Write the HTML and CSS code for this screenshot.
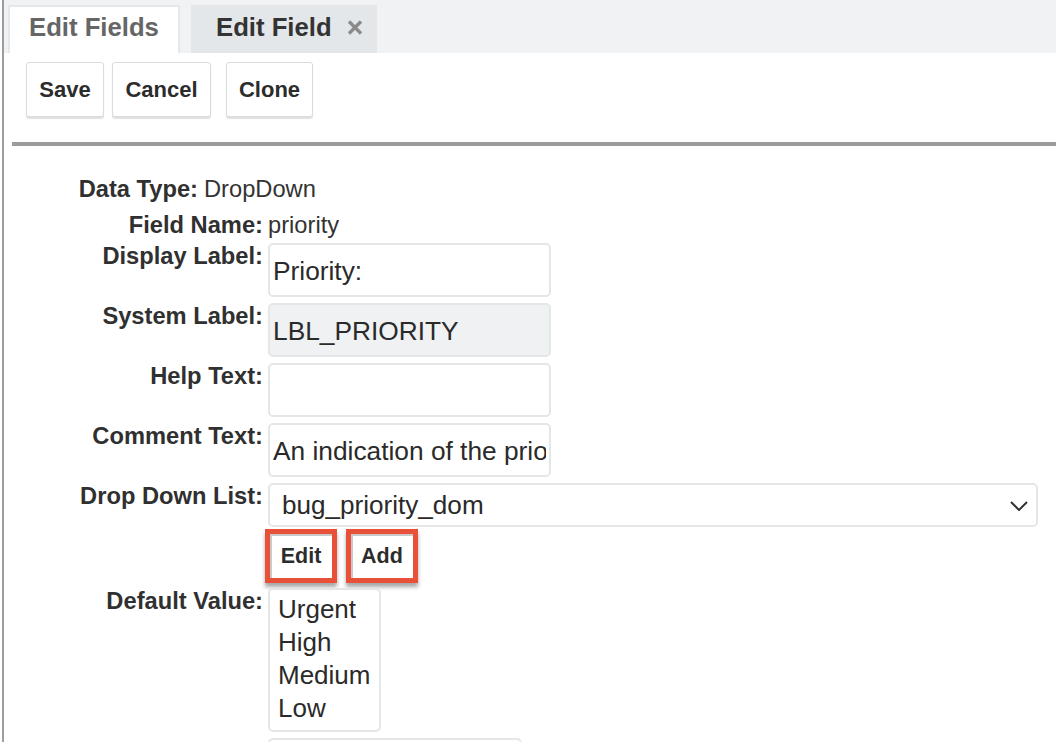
FILE: index.html
```html
<!DOCTYPE html>
<html lang="en">
<head>
<meta charset="utf-8">
<title>Edit Field</title>
<link rel="stylesheet" href="styles.css">
</head>
<body>
<div class="frame">
  <div class="tabs">
    <div class="tab tab-inactive">Edit Fields</div>
    <div class="tab tab-active">Edit Field
      <svg class="tab-close" width="16" height="15" viewBox="0 0 16 15"><path d="M2 1.5 L14 13.5 M14 1.5 L2 13.5" stroke="#8a8a8a" stroke-width="3.4" fill="none"/></svg>
    </div>
  </div>
  <div class="toolbar">
    <button class="btn btn-save">Save</button>
    <button class="btn btn-cancel">Cancel</button>
    <button class="btn btn-clone">Clone</button>
  </div>
  <div class="rule"></div>
  <div class="form">
    <div class="row row-first">
      <div class="label label-short">Data Type:</div>
      <div class="value-text">DropDown</div>
    </div>
    <div class="row row-second">
      <div class="label">Field Name:</div>
      <div class="value-text value-plain">priority</div>
    </div>
    <div class="row row-input">
      <div class="label">Display Label:</div>
      <input class="text-input" type="text" value="Priority:">
    </div>
    <div class="row row-input">
      <div class="label">System Label:</div>
      <input class="text-input text-input-disabled" type="text" value="LBL_PRIORITY" readonly>
    </div>
    <div class="row row-input">
      <div class="label">Help Text:</div>
      <input class="text-input" type="text" value="">
    </div>
    <div class="row row-input">
      <div class="label">Comment Text:</div>
      <input class="text-input" type="text" value="An indication of the priority of the issue">
    </div>
    <div class="row row-input">
      <div class="label">Drop Down List:</div>
      <div class="select">
        <span class="select-text">bug_priority_dom</span>
        <svg class="chevron" width="18" height="10" viewBox="0 0 18 10"><path d="M1 1 L9 9 L17 1" stroke="#333" stroke-width="2" fill="none"/></svg>
      </div>
    </div>
    <div class="row row-actions">
      <div class="label"></div>
      <div class="actions">
        <button class="hl-btn hl-edit">Edit</button>
        <button class="hl-btn hl-add">Add</button>
      </div>
    </div>
    <div class="row row-list">
      <div class="label">Default Value:</div>
      <div class="listbox">
        <div class="option">Urgent</div>
        <div class="option">High</div>
        <div class="option">Medium</div>
        <div class="option">Low</div>
      </div>
    </div>
    <div class="row row-last">
      <div class="label"></div>
      <input class="text-input text-input-short" type="text" value="">
    </div>
  </div>
</div>
</body>
</html>
```
FILE: styles.css
```css
* { box-sizing: border-box; }
html, body {
  margin: 0;
  padding: 0;
  background: #ffffff;
  overflow: hidden;
}
body {
  font-family: "Liberation Sans", Arial, Helvetica, sans-serif;
  color: #333333;
}
.frame {
  margin-left: 2px;
  border-left: 2px solid #9d9d9d;
  height: 742px;
  overflow: hidden;
}
.tabs {
  display: flex;
  gap: 11px;
  height: 53px;
  padding: 5px 0 0 4px;
  background: #f0f2f4;
}
.tab {
  height: 48px;
  font-size: 25.7px;
  font-weight: bold;
  line-height: 30px;
  padding-top: 7px;
  white-space: nowrap;
}
.tab-inactive {
  width: 172px;
  background: #ffffff;
  color: #666666;
  border: 2px solid #e3e8ec;
  border-bottom: none;
  padding-left: 19px;
  padding-top: 5px;
}
.tab-active {
  width: 186px;
  background: #e4e7ea;
  color: #333333;
  padding-left: 25px;
  display: flex;
  align-items: flex-start;
}
.tab-close {
  margin-left: 15px;
  margin-top: 8px;
}
.toolbar {
  display: flex;
  padding: 9px 0 0 22px;
}
.btn {
  height: 55px;
  background: #ffffff;
  border: 1px solid #d9dcde;
  border-radius: 3px;
  box-shadow: 0 2px 1px rgba(0,0,0,0.12);
  font-family: "Liberation Sans", Arial, sans-serif;
  font-size: 22px;
  font-weight: bold;
  color: #2c2c2c;
  padding: 0;
}
.btn-save { width: 78px; }
.btn-cancel { width: 99px; margin-left: 8px; }
.btn-clone { width: 87px; margin-left: 15px; }
.rule {
  height: 4px;
  margin: 25px 0 0 8px;
  background: #9b9b9b;
}
.form {
  padding-top: 30px;
  display: flex;
  flex-direction: column;
}
.row {
  display: flex;
  align-items: flex-start;
  gap: 5px;
}
.label {
  width: 259px;
  flex: none;
  text-align: right;
  font-size: 23.7px;
  font-weight: bold;
  line-height: 26px;
  color: #303030;
  white-space: nowrap;
}
.label-short { width: 194px; }
.row-first { gap: 6px; }
.row-second { margin-top: 10px; }
.value-text {
  font-size: 23.7px;
  line-height: 26px;
  color: #333333;
}
.row-input { margin-top: 6px; }
.row-input:nth-child(3) { margin-top: 5px; }
.text-input {
  width: 283px;
  height: 54px;
  border: 2px solid #e3e7ea;
  border-radius: 5px;
  background: #ffffff;
  font-family: "Liberation Sans", Arial, sans-serif;
  font-size: 26.3px;
  color: #2a2a2a;
  padding: 3px 3px 0 3px;
  outline: none;
}
.text-input-disabled { background: #eff1f3; }
.select {
  width: 770px;
  height: 44px;
  border: 2px solid #e3e7ea;
  border-radius: 5px;
  background: #ffffff;
  display: flex;
  align-items: center;
  justify-content: space-between;
  padding: 0 8px 0 12px;
}
.select-text {
  font-size: 26.1px;
  color: #2a2a2a;
  line-height: 30px;
}
.chevron { margin-top: 2px; }
.row-actions { margin-top: 2px; }
.actions {
  display: flex;
  gap: 9px;
  margin-left: -3px;
}
.hl-btn {
  width: 72px;
  height: 54px;
  border: 5px solid #e9503a;
  background: #ffffff;
  box-shadow: inset 2px 2px 0 #c9c9c9, 0 4px 4px rgba(0,0,0,0.35);
  font-family: "Liberation Sans", Arial, sans-serif;
  font-size: 21.5px;
  font-weight: bold;
  color: #2c2c2c;
  padding: 0;
}
.row-list { margin-top: 5px; }
.listbox {
  width: 113px;
  height: 144px;
  border: 2px solid #e3e7ea;
  border-radius: 5px;
  padding: 3px 8px;
}
.option {
  font-size: 26px;
  line-height: 33px;
  color: #2a2a2a;
  white-space: nowrap;
}
.row-last { margin-top: 6px; }
.text-input-short { width: 254px; }
```
